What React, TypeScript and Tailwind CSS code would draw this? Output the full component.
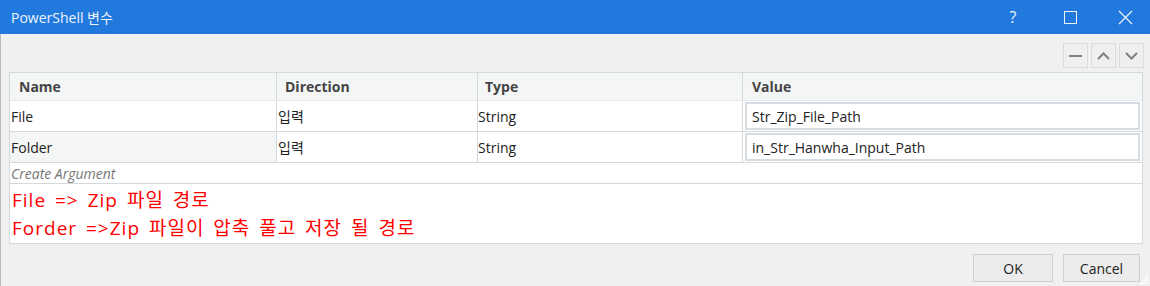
import React from "react";

const font = { fontFamily: '"Open Sans", "Noto Sans", "Noto Sans CJK KR", sans-serif' };

type Arg = { name: string; direction: string; type: string; value: string; selected?: boolean };

const args: Arg[] = [
  { name: "File", direction: "입력", type: "String", value: "Str_Zip_File_Path" },
  { name: "Folder", direction: "입력", type: "String", value: "in_Str_Hanwha_Input_Path", selected: true },
];

const ToolButton = ({ children }: { children: React.ReactNode }) => (
  <div className="flex h-[25px] w-[25px] items-center justify-center border border-[#dcdcdc] bg-[#efefef] text-[#7a7a7a]">
    {children}
  </div>
);

export default function App() {
  return (
    <div className="relative flex h-[286px] w-[1150px] flex-col overflow-hidden bg-[#f0f0f0]" style={font}>
      {/* title bar */}
      <div className="flex h-[34px] shrink-0 items-center bg-[#2179de] pl-[11px] text-[14px] text-[#eef4fc]">
        <span className="flex-1">PowerShell 변수</span>
        <span className="w-[30px] text-center text-[16px]">?</span>
        <div className="ml-[27px] flex w-[30px] justify-center">
          <div className="h-[13px] w-[13px] border border-[#eef4fc]" />
        </div>
        <div className="ml-[25px] mr-[10px] flex w-[30px] justify-center">
          <svg width="15" height="15" viewBox="0 0 15 15">
            <path d="M1 1L14 14M14 1L1 14" stroke="#eef4fc" strokeWidth="1.2" />
          </svg>
        </div>
      </div>

      <div className="flex flex-1 flex-col border-l border-[#bcbcbc] pl-[8px] pr-[6px]">
        {/* toolbar */}
        <div className="flex justify-end gap-[3px] pt-[9px] pb-[4px]">
          <ToolButton>
            <div className="h-[2px] w-[13px] bg-[#808080]" />
          </ToolButton>
          <ToolButton>
            <svg width="13" height="8" viewBox="0 0 13 8">
              <path d="M1 7L6.5 1.5L12 7" fill="none" stroke="#808080" strokeWidth="2" />
            </svg>
          </ToolButton>
          <ToolButton>
            <svg width="13" height="8" viewBox="0 0 13 8">
              <path d="M1 1L6.5 6.5L12 1" fill="none" stroke="#808080" strokeWidth="2" />
            </svg>
          </ToolButton>
        </div>

        {/* grid */}
        <div className="w-[1134px] border border-[#d3d9dd] bg-white text-[14px] text-[#222]">
          <div className="grid h-[28px] grid-cols-[267px_201px_265px_1fr] border-b border-[#e4e8ea] bg-[#f4f6f6] font-bold text-[#444]">
            <div className="flex items-center border-r border-[#d3d9dd] pl-[9px]">Name</div>
            <div className="flex items-center border-r border-[#d3d9dd] pl-[8px]">Direction</div>
            <div className="flex items-center border-r border-[#d3d9dd] pl-[7px]">Type</div>
            <div className="flex items-center pl-[9px]">Value</div>
          </div>
          {args.map((a) => (
            <div key={a.name} className="grid h-[31px] grid-cols-[267px_201px_265px_1fr] border-b border-[#d3d9dd]">
              <div className={`flex items-center border-r border-[#d3d9dd] pl-[1px] ${a.selected ? "bg-[#f4f6f6]" : ""}`}>
                {a.name}
              </div>
              <div className="flex items-center border-r border-[#d3d9dd] pl-[1px]">{a.direction}</div>
              <div className="flex items-center border-r border-[#d3d9dd]">{a.type}</div>
              <div className="flex items-center pl-[2px] pr-[2px]">
                <div className="flex h-[28px] w-full items-center border-2 border-[#d5dde2] bg-white pl-[5px]">
                  {a.value}
                </div>
              </div>
            </div>
          ))}
          <div className="flex h-[21px] items-center border-b border-[#d3d9dd] pl-[1px] italic text-[#777]">
            Create Argument
          </div>
          <div className="flex h-[59px] flex-col justify-center pl-[2px] text-[19px] leading-[28px] tracking-[1px] [word-spacing:3px] text-[#ff0000]">
            <div>File =&gt; Zip 파일 경로</div>
            <div>Forder =&gt;Zip 파일이 압축 풀고 저장 될 경로</div>
          </div>
        </div>

        {/* footer buttons */}
        <div className="flex justify-end gap-[10px] pt-[10px] pr-[4px] text-[14px] text-[#222]">
          <button className="h-[28px] w-[80px] border border-[#d0d0d0] bg-[#ececec]">OK</button>
          <button className="h-[28px] w-[77px] border border-[#d0d0d0] bg-[#ececec]">Cancel</button>
        </div>
      </div>

      {/* resize grip */}
      <svg className="absolute bottom-[2px] right-[2px]" width="8" height="8" viewBox="0 0 8 8">
        <rect x="6" y="0" width="2" height="2" fill="#ffffff" />
        <rect x="3" y="3" width="2" height="2" fill="#ffffff" />
        <rect x="6" y="3" width="2" height="2" fill="#ffffff" />
        <rect x="0" y="6" width="2" height="2" fill="#ffffff" />
        <rect x="3" y="6" width="2" height="2" fill="#ffffff" />
        <rect x="6" y="6" width="2" height="2" fill="#ffffff" />
      </svg>
    </div>
  );
}
